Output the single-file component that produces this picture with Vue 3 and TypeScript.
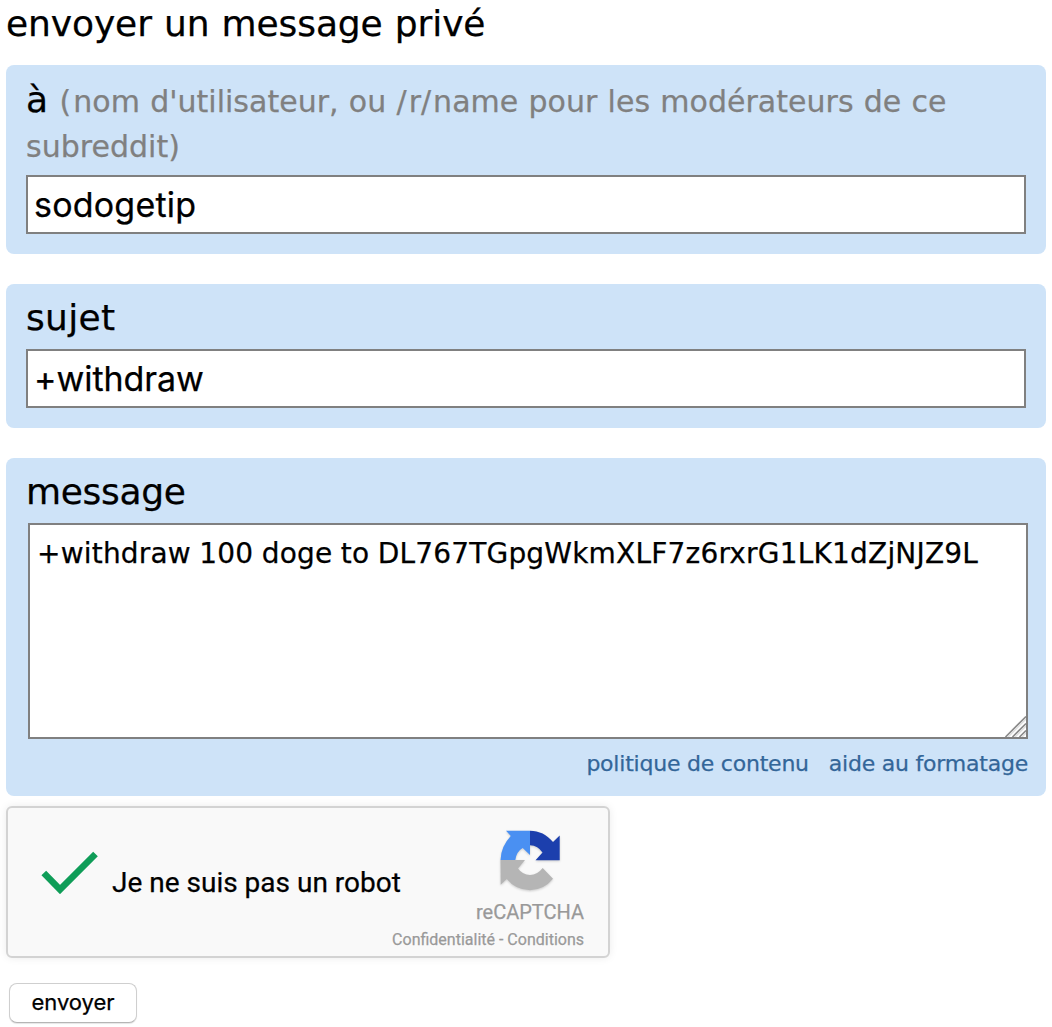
<script setup lang="ts">
import { ref } from 'vue'

const recipient = ref('sodogetip')
const subject = ref('+withdraw')
const message = ref('+withdraw 100 doge to DL767TGpgWkmXLF7z6rxrG1LK1dZjNJZ9L')
</script>

<template>
  <form class="compose" @submit.prevent>
    <h1>envoyer un message privé</h1>

    <section class="panel">
      <label for="to" class="recipient">à <span class="hint"><span class="wide">(</span>nom d'utilisateur, ou <span class="wide">/</span>r<span class="wide">/</span>name pour les modérateurs de ce</span> <span class="hint">subreddit)</span></label>
      <input id="to" v-model="recipient" type="text" spellcheck="false" />
    </section>

    <section class="panel">
      <label for="subject" class="subject-label">sujet</label>
      <input id="subject" v-model="subject" class="subject" type="text" spellcheck="false" />
    </section>

    <section class="panel message">
      <label for="message" class="message-label">message</label>
      <div class="area">
        <textarea id="message" v-model="message" spellcheck="false"></textarea>
        <svg class="grip" width="22" height="22" viewBox="0 0 22 22" fill="none">
          <path d="M1.500 22 22 1.500M8.500 22 22 8.500M15.500 22 22 15.500" stroke="#8c8c8c" stroke-width="1.7" />
          <path d="M4 22 22 4M11 22 22 11M18 22 22 18" stroke="#dedede" stroke-width="1.500" />
        </svg>
      </div>
      <nav>
        <a>politique de contenu</a>
        <a>aide au formatage</a>
      </nav>
    </section>

    <section class="captcha">
      <svg class="check" width="60" height="44" viewBox="0 0 60 44" fill="none">
        <path d="M3.800 23 20 39.500 55.500 4" stroke="#0f9d58" stroke-width="6.600" />
      </svg>
      <span class="robot">Je ne suis pas un robot</span>
      <div class="brand">
        <svg class="logo" width="62" height="62" viewBox="0 0 62 62">
          <path fill="#4a90f2" d="M6 .7H30V25L22.700 18Q16.500 21.500 15.300 30H.5Q.8 16.500 10.800 6Z" />
          <path fill="#1c3fad" d="M30 .7C39 .8 47 4.500 53 12L59.700 5.500V30.300H35.500L42.500 22.500Q38 15.500 30 15.200Z" />
          <path fill="#b5b5b5" d="M.5 30H25L18 38.500Q22.500 44.800 30 45 37.500 44.800 42.700 38L53 48.800Q44 60 30 60.200 15.500 60 6.800 49L.7 54.800Z" />
        </svg>
        <span class="name">reCAPTCHA</span>
        <span class="terms">Confidentialité - Conditions</span>
      </div>
    </section>

    <button type="submit">envoyer</button>
  </form>
</template>

<style>
body {
  background: #fff;
}
</style>

<style scoped>
.compose {
  box-sizing: border-box;
  width: 1052px;
  height: 1027px;
  padding: 0 6px;
  overflow: hidden;
  display: flex;
  flex-direction: column;
  font-family: "DejaVu Sans", Verdana, sans-serif;
  color: #000;
  -webkit-text-stroke: 0.25px currentColor;
}
h1 {
  margin: 0;
  height: 65px;
  flex: none;
  font-size: 36px;
  font-weight: 400;
  line-height: 48px;
  letter-spacing: -0.1px;
  word-spacing: 0.8px;
  white-space: nowrap;
}
.panel {
  box-sizing: border-box;
  flex: none;
  display: flex;
  flex-direction: column;
  height: 144px;
  margin-bottom: 30px;
  padding: 10px 20px;
  border-radius: 8px;
  background: #cee3f8;
}
.panel:first-of-type {
  height: 189px;
}
.panel.message {
  height: 338px;
  margin-bottom: 10px;
  padding-right: 18px;
}
label {
  box-sizing: border-box;
  display: block;
  flex: none;
  height: 55px;
  font-size: 36px;
  line-height: 48px;
}
.subject-label {
  letter-spacing: 0.35px;
}
.message-label {
  letter-spacing: -0.3px;
}
.recipient {
  height: 100px;
  padding-top: 2px;
  line-height: 45px;
}
.hint {
  font-size: 30px;
  line-height: 36px;
  letter-spacing: 0.02px;
  word-spacing: 0.7px;
  color: #808080;
}
.wide {
  letter-spacing: 2px;
}
input,
textarea {
  box-sizing: border-box;
  display: block;
  flex: none;
  margin: 0;
  border: 2px solid #808080;
  border-radius: 0;
  outline: none;
  background: #fff;
  color: #000;
  -webkit-text-stroke: inherit;
}
input {
  width: 1000px;
  height: 59px;
  padding: 1px 6px;
  font: 34px/50px Inter, sans-serif;
  letter-spacing: 0.2px;
}
.subject {
  letter-spacing: -0.05px;
}
.area {
  position: relative;
  width: 1000px;
  height: 216px;
  flex: none;
  margin-left: 2px;
}
textarea {
  width: 100%;
  height: 100%;
  padding: 11px 6px 0 7px;
  resize: none;
  overflow: hidden;
  white-space: nowrap;
  font: 28px/36px "DejaVu Sans", Verdana, sans-serif;
  letter-spacing: 0.19px;
  word-spacing: -0.7px;
}
.grip {
  position: absolute;
  right: 2px;
  bottom: 2px;
}
nav {
  display: flex;
  justify-content: flex-end;
  gap: 20px;
  padding-top: 11px;
  font-size: 22px;
  line-height: 28px;
  letter-spacing: -0.22px;
  color: #336699;
  white-space: nowrap;
}
.captcha {
  box-sizing: border-box;
  display: flex;
  width: 604px;
  height: 152px;
  flex: none;
  border: 2px solid #d3d3d3;
  border-radius: 6px;
  background: #f9f9f9;
  box-shadow: 0 0 8px rgba(0, 0, 0, 0.08);
  font-family: Roboto, sans-serif;
  white-space: nowrap;
}
.check {
  flex: none;
  margin: 42px 0 0 32px;
}
.robot {
  flex: none;
  margin: 58px 0 0 12px;
  font-size: 28px;
  line-height: 34px;
}
.brand {
  display: flex;
  flex-direction: column;
  align-items: flex-end;
  flex: 1;
  margin-left: -30px;
  padding: 22px 24px 0 0;
  color: #999;
}
.logo {
  flex: none;
  margin-right: 22px;
  filter: drop-shadow(0 1px 1px rgba(0, 0, 0, 0.18));
}
.name {
  margin-top: 8px;
  font-size: 20px;
  line-height: 24px;
}
.terms {
  margin-top: 6px;
  font-size: 16px;
  line-height: 20px;
}
button {
  box-sizing: border-box;
  flex: none;
  width: 128px;
  height: 40px;
  margin: 25px 0 0 3px;
  padding: 0 0 2px;
  border: 1px solid #cfcfcf;
  border-bottom-color: #b5b5b5;
  border-radius: 8px;
  background: #fff;
  box-shadow: 0 1px 1px rgba(0, 0, 0, 0.1);
  color: #000;
  font: 22px/36px Inter, sans-serif;
}
</style>
